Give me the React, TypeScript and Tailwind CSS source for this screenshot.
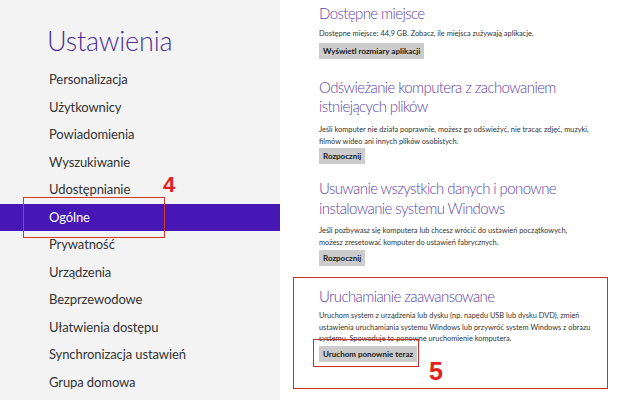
import React from "react";

const items = [
  "Personalizacja",
  "Użytkownicy",
  "Powiadomienia",
  "Wyszukiwanie",
  "Udostępnianie",
  "Ogólne",
  "Prywatność",
  "Urządzenia",
  "Bezprzewodowe",
  "Ułatwienia dostępu",
  "Synchronizacja ustawień",
  "Grupa domowa",
];

function Btn({ children }: { children: React.ReactNode }) {
  return (
    <div className="flex h-[16px] items-center bg-[#cccccc] px-[4px] text-[8px] font-bold leading-none text-[#1a1a1a]">
      {children}
    </div>
  );
}

function H({ children }: { children: React.ReactNode }) {
  return (
    <h2 className="whitespace-nowrap text-[15px] font-light leading-[19px] tracking-[-0.6px] text-[#6045a6]">
      {children}
    </h2>
  );
}

function P({ children }: { children: React.ReactNode }) {
  return (
    <p className="whitespace-nowrap text-[7.4px] leading-[12px] text-[#333333]">
      {children}
    </p>
  );
}

export default function App() {
  return (
    <div
      className="relative flex h-[400px] w-[640px] overflow-hidden bg-white"
      style={{ fontFamily: 'Lato, "Open Sans", sans-serif' }}
    >
      <aside className="flex w-[280px] shrink-0 flex-col bg-[#f3f3f3]">
        <h1 className="ml-[47px] mt-[24px] text-[27px] font-light leading-[34px] tracking-[-0.2px] text-[#4b3196]">
          Ustawienia
        </h1>
        <ul className="mt-[8px] flex flex-col">
          {items.map((it) =>
            it === "Ogólne" ? (
              <li
                key={it}
                className="flex h-[27.5px] items-center bg-[#4617b4] pl-[49px] text-[13px] tracking-[-0.1px] text-white"
              >
                {it}
              </li>
            ) : (
              <li
                key={it}
                className="flex h-[27.5px] items-center pl-[49px] text-[13px] tracking-[-0.1px] text-[#333333]"
              >
                {it}
              </li>
            )
          )}
        </ul>
      </aside>
      <main className="flex flex-1 flex-col items-start pl-[39px]">
        <section className="mt-[4px] flex flex-col items-start">
          <H>Dostępne miejsce</H>
          <div className="mt-[5px]">
            <P>Dostępne miejsce: 44,9 GB. Zobacz, ile miejsca zużywają aplikacje.</P>
          </div>
          <div className="mt-[3px]">
            <Btn>Wyświetl rozmiary aplikacji</Btn>
          </div>
        </section>
        <section className="mt-[19px] flex flex-col items-start">
          <H>
            Odświeżanie komputera z zachowaniem
            <br />
            istniejących plików
          </H>
          <div className="mt-[8px]">
            <P>
              Jeśli komputer nie działa poprawnie, możesz go odświeżyć, nie tracąc zdjęć, muzyki,
              <br />
              filmów wideo ani innych plików osobistych.
            </P>
          </div>
          <div className="mt-[0px]">
            <Btn>Rozpocznij</Btn>
          </div>
        </section>
        <section className="mt-[14px] flex flex-col items-start">
          <h2 className="whitespace-nowrap text-[15px] font-light leading-[20px] tracking-[-0.6px] text-[#6045a6]">
            Usuwanie wszystkich danych i ponowne
            <br />
            instalowanie systemu Windows
          </h2>
          <div className="mt-[7px]">
            <P>
              Jeśli pozbywasz się komputera lub chcesz wrócić do ustawień początkowych,
              <br />
              możesz zresetować komputer do ustawień fabrycznych.
            </P>
          </div>
          <div className="mt-[1px]">
            <Btn>Rozpocznij</Btn>
          </div>
        </section>
        <section className="mt-[20px] flex flex-col items-start">
          <h2 className="whitespace-nowrap text-[15px] font-light leading-[20px] tracking-[-0.6px] text-[#6045a6]">
            Uruchamianie zaawansowane
          </h2>
          <div className="mt-[4px]">
            <p className="whitespace-nowrap text-[7.4px] leading-[11.5px] text-[#333333]">
              Uruchom system z urządzenia lub dysku (np. napędu USB lub dysku DVD), zmień
              <br />
              ustawienia uruchamiania systemu Windows lub przywróć system Windows z obrazu
              <br />
              systemu. Spowoduje to ponowne uruchomienie komputera.
            </p>
          </div>
          <div className="mt-[1px]">
            <Btn>Uruchom ponownie teraz</Btn>
          </div>
        </section>
      </main>

      {/* annotations */}
      <div className="absolute left-[23px] top-[197px] h-[41px] w-[142px] border border-[#d23a2a]" />
      <div
        className="absolute left-[163px] top-[174px] text-[22px] font-bold leading-none text-[#e0221b]"
        style={{ fontFamily: '"Liberation Sans", Arial, sans-serif' }}
      >
        4
      </div>
      <div className="absolute left-[293px] top-[277px] h-[112px] w-[315px] border border-[#c8302a]" />
      <div className="absolute left-[313px] top-[339px] h-[28px] w-[106px] border border-[#c8302a]" />
      <div
        className="absolute left-[429px] top-[359px] text-[25px] font-bold leading-none text-[#e0221b]"
        style={{ fontFamily: '"Liberation Sans", Arial, sans-serif' }}
      >
        5
      </div>
    </div>
  );
}
